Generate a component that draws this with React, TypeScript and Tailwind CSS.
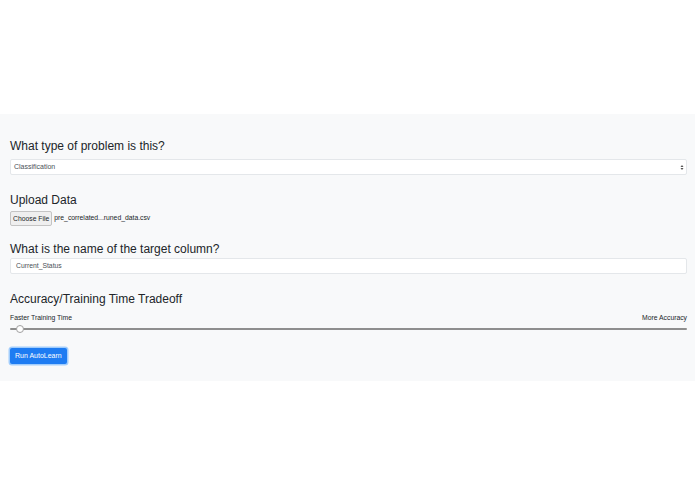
export default function App() {
  return (
    <div className="min-h-[494px] bg-white font-['Liberation_Sans',Arial,sans-serif] text-[#212529]">
      <div className="h-[114px]" />
      <div className="bg-[#f8f9fa] pl-[10px] pr-[8px] pt-[24px] pb-[16px]">
        <h2 className="text-[12px] leading-[16px]">What type of problem is this?</h2>
        <div className="mt-[5px] flex h-[16px] items-center justify-between rounded-[2px] border border-[#e4e7ea] bg-white pl-[3px] pr-[2px] text-[7px] text-[#495057]">
          <span>Classification</span>
          <svg width="4" height="7" viewBox="0 0 4 7" className="text-[#555]">
            <path d="M0.5 3 L2 1 L3.5 3 Z M0.5 4 L2 6 L3.5 4 Z" fill="currentColor" />
          </svg>
        </div>

        <h2 className="mt-[17px] text-[12px] leading-[16px]">Upload Data</h2>
        <div className="mt-[3px] flex items-center gap-[2px] text-[6.8px]">
          <span className="rounded-[2px] border border-[#c4c4c4] bg-[#efefef] px-[2px] py-[2.5px] leading-[8px]">Choose File</span>
          <span>pre_correlated...runed_data.csv</span>
        </div>

        <h2 className="mt-[15px] text-[12px] leading-[16px]">What is the name of the target column?</h2>
        <div className="mt-[1px] flex h-[16px] items-center rounded-[2px] border border-[#e4e7ea] bg-white pl-[5px] text-[6.8px] text-[#495057]">
          Current_Status
        </div>

        <h2 className="mt-[17px] text-[12px] leading-[16px]">Accuracy/Training Time Tradeoff</h2>
        <div className="mt-[6px] flex justify-between text-[6.8px] leading-[9px]">
          <span>Faster Training Time</span>
          <span>More Accuracy</span>
        </div>
        <div className="relative mt-[3px] h-[8px]">
          <div className="absolute inset-x-0 top-[3px] h-[2px] rounded-full bg-[#8e8e8e]" />
          <div className="absolute left-[6px] top-0 h-[8px] w-[8px] rounded-full border border-[#a0a0a0] bg-white" />
        </div>

        <button className="mt-[15px] rounded-[2px] bg-[#1e7cf2] px-[5px] py-[4px] text-[7px] leading-[8px] text-white shadow-[0_0_0_1.5px_rgba(0,123,255,0.35)]">
          Run AutoLearn
        </button>
      </div>
    </div>
  );
}
